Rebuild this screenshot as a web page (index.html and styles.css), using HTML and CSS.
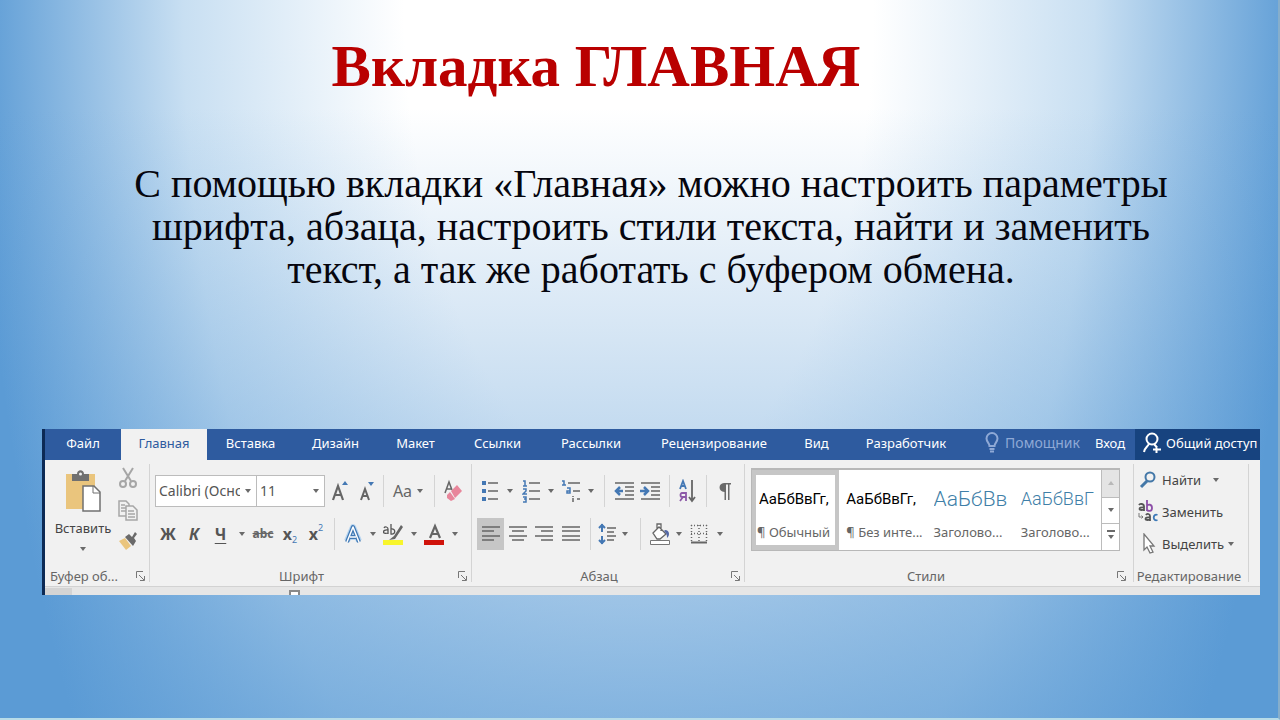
FILE: index.html
```html
<!DOCTYPE html>
<html lang="ru">
<head>
<meta charset="utf-8">
<title>Вкладка ГЛАВНАЯ</title>
<link rel="stylesheet" href="styles.css">
</head>
<body>
<main class="slide">
  <h1 class="title">Вкладка ГЛАВНАЯ</h1>
  <p class="lead">С помощью вкладки «Главная» можно настроить параметры<br>шрифта, абзаца, настроить стили текста, найти и заменить<br>текст, а так же работать с буфером обмена.</p>

  <section class="ribbon">
    <nav class="tabs">
      <button class="tab">Файл</button>
      <button class="tab tab-active">Главная</button>
      <button class="tab">Вставка</button>
      <button class="tab">Дизайн</button>
      <button class="tab">Макет</button>
      <button class="tab">Ссылки</button>
      <button class="tab">Рассылки</button>
      <button class="tab">Рецензирование</button>
      <button class="tab">Вид</button>
      <button class="tab">Разработчик</button>
      <button class="tab tab-help"><svg width="14" height="22" viewBox="0 0 14 22" fill="none" stroke="currentColor" stroke-width="2"><path d="M4.500 14C4.500 11 1.500 10 1.500 6.500a5.500 5.500 0 0 1 11 0C12.500 10 9.500 11 9.500 14ZM4.500 17h5M5 19.500h4"/></svg>Помощник</button>
      <button class="tab">Вход</button>
      <button class="tab tab-share"><svg width="20" height="22" viewBox="0 0 20 22" fill="none" stroke="currentColor" stroke-width="2"><circle cx="10" cy="7" r="5.500"/><path d="M7 11.500C6 15 3 15 2 20M12 12l3 3.500M14.500 14v7M11 17.500h8"/></svg>Общий доступ</button>
    </nav>

    <div class="groups">
      <div class="group group-clipboard">
        <div class="clip">
          <button class="paste">
            <svg width="36" height="42" viewBox="0 0 36 42"><path fill="#eac57d" d="M1 4h29v35H1z"/><path fill="#707070" d="M7 4h5c0-5 7-5 7 0h5v7H7z"/><circle cx="15.500" cy="4" r="1.500" fill="#f1f1f1"/><path fill="#fff" stroke="#707070" stroke-width="1.500" d="M18 16h11l6 6v19H18z"/><path fill="none" stroke="#707070" d="M28 16v7h7"/></svg>
            <span>Вставить</span><i class="caret"></i>
          </button>
          <div class="clip-tools">
            <button aria-label="Вырезать"><svg width="18" height="22" viewBox="0 0 18 22" fill="none" stroke="#a6a6a6" stroke-width="2"><path d="M4 1l8 13M14 1L6 14"/><circle cx="4" cy="17" r="3"/><circle cx="14" cy="17" r="3"/></svg></button>
            <button aria-label="Копировать"><svg width="20" height="22" viewBox="0 0 20 22" fill="#f1f1f1" stroke="#a6a6a6" stroke-width="1.500"><path d="M1 2h7l3 3v12H1zM3 6h4M3 9h5M3 12h5"/><path d="M8 7h7l4 4v10H8zM10 12h6M10 15h7M10 18h7"/></svg></button>
            <button aria-label="Формат по образцу"><svg width="20" height="20" viewBox="0 0 20 20"><path fill="#eac57d" d="M1 10l6-3 6 8-5 4z"/><path fill="#6a6a6a" d="M7 6l4-3 3 3 3-5 2 2-3 4 2 3-3 5z"/></svg></button>
          </div>
        </div>
        <div class="caption"><span>Буфер об...</span><button class="launch" aria-label="Параметры буфера"><svg width="9" height="10" viewBox="0 0 9 10" fill="none" stroke="#777"><path d="M.5 7V.5H7M3 4l5 5M8.500 5v4.500H4"/></svg></button></div>
      </div>

      <div class="group group-font">
        <div class="row font-row-1">
          <label class="combo"><select aria-label="Шрифт"><option>Calibri (Основной текст)</option></select><i class="caret"></i></label>
          <label class="combo"><select aria-label="Размер шрифта"><option>11</option></select><i class="caret"></i></label>
          <button aria-label="Увеличить размер"><svg width="18" height="22" viewBox="0 0 18 22" fill="none"><path stroke="#666" stroke-width="2.200" d="M2 20L7 6l5 14M4 15h6"/><path fill="#4478b4" d="M11 5l3-4 3 4z"/></svg></button>
          <button aria-label="Уменьшить размер"><svg width="16" height="22" viewBox="0 0 16 22" fill="none"><path stroke="#666" stroke-width="2" d="M2 20L6 9l4 11M4 16h5"/><path fill="#4478b4" d="M9 2l3 4 3-4z"/></svg></button>
          <i class="rule"></i>
          <button class="case">Aa<i class="caret"></i></button>
          <i class="rule"></i>
          <button aria-label="Очистить формат"><svg width="20" height="24" viewBox="0 0 20 24"><path fill="none" stroke="#666" stroke-width="1.500" d="M2 14L6 3l3 8M3 10h5"/><path fill="#e8869b" d="M8 12l6-6 5 6-7 7zM4 16l3-3 5 7-4 2-4-3z"/></svg></button>
        </div>
        <div class="row font-row-2">
          <button class="glyph bold">Ж</button>
          <button class="glyph bold slant">К</button>
          <button class="glyph bold under">Ч</button>
          <button aria-label="Вид подчёркивания"><i class="caret"></i></button>
          <button class="strike">abc</button>
          <button class="glyph bold">x<sub>2</sub></button>
          <button class="glyph bold">x<sup>2</sup></button>
          <i class="rule"></i>
          <button aria-label="Эффекты текста"><svg width="20" height="22" viewBox="0 0 20 22" fill="none" stroke-linejoin="round"><path stroke="#b9d6f0" stroke-width="6" d="M4 18L10 4l6 14M7 14h6"/><path stroke="#3f78b4" stroke-width="4" d="M4 19L10 4l6 15M7 14h6"/><path stroke="#fff" stroke-width="1.500" d="M4 19L10 4l6 15M7 14h6"/></svg></button>
          <button aria-label="Вид текстовых эффектов"><i class="caret"></i></button>
          <button class="marker" aria-label="Цвет выделения"><svg width="20" height="22" viewBox="0 0 20 22"><path fill="none" stroke="#555" stroke-width="1.300" d="M1 5c1-2 4-1 4 1v5M5 7c-6-1-6 5 0 3M8 1v10c5 1 5-6 0-5"/><path fill="#666" d="M18 2l2 2-8 12-6 1 5-4z"/><path fill="#f8f52c" d="M0 17h20v5H0z"/></svg></button>
          <button aria-label="Выбор выделения"><i class="caret"></i></button>
          <button aria-label="Цвет текста"><svg width="20" height="22" viewBox="0 0 20 22" fill="none"><path stroke="#666" stroke-width="2.200" d="M6 15l5-12 5 12M8 11h6"/><path fill="#d0130b" d="M0 17h20v5H0z"/></svg></button>
          <button aria-label="Выбор цвета текста"><i class="caret"></i></button>
        </div>
        <div class="caption"><span>Шрифт</span><button class="launch" aria-label="Параметры шрифта"><svg width="9" height="10" viewBox="0 0 9 10" fill="none" stroke="#777"><path d="M.5 7V.5H7M3 4l5 5M8.500 5v4.500H4"/></svg></button></div>
      </div>

      <div class="group group-para">
        <div class="row para-row-1">
          <button aria-label="Маркеры"><svg width="18" height="22" viewBox="0 0 18 22"><path stroke="#666" stroke-width="1.500" d="M7 3h10M7 11h10M7 19h10"/><path fill="#4478b4" d="M1 1h4v4H1zM1 9h4v4H1zM1 17h4v4H1z"/></svg></button>
          <button aria-label="Вид маркеров"><i class="caret"></i></button>
          <button aria-label="Нумерация"><svg width="18" height="24" viewBox="0 0 18 24" fill="none"><path stroke="#666" stroke-width="1.500" d="M7 4h11M7 12h11M7 20h11"/><path stroke="#4478b4" stroke-width="1.500" d="M1 2h2v5M1 7h4M1 10h3v2l-3 3h4M1 18h3v5H1M2 20h2"/></svg></button>
          <button aria-label="Вид нумерации"><i class="caret"></i></button>
          <button aria-label="Многоуровневый список"><svg width="20" height="24" viewBox="0 0 20 24" fill="none"><path stroke="#666" stroke-width="1.500" d="M7 4h12M12 12h7M16 20h3M12 17v1M12 19v4"/><path stroke="#4478b4" stroke-width="1.500" d="M1 2h2v4M1 6h4M6 9h3v5H6v-2h3"/></svg></button>
          <button aria-label="Вид многоуровневого списка"><i class="caret"></i></button>
          <i class="rule"></i>
          <button aria-label="Уменьшить отступ"><svg width="20" height="20" viewBox="0 0 20 20" fill="none"><path stroke="#666" stroke-width="1.500" d="M1 2h19M11 6h9M11 10h9M11 14h9M1 18h19"/><path stroke="#4478b4" stroke-width="2.500" d="M9 10H2M6 6l-4 4 4 4"/></svg></button>
          <button aria-label="Увеличить отступ"><svg width="20" height="20" viewBox="0 0 20 20" fill="none"><path stroke="#666" stroke-width="1.500" d="M1 2h19M11 6h9M11 10h9M11 14h9M1 18h19"/><path stroke="#4478b4" stroke-width="2.500" d="M0 10h7M4 6l4 4-4 4"/></svg></button>
          <i class="rule"></i>
          <button aria-label="Сортировка"><svg width="18" height="24" viewBox="0 0 18 24" fill="none" stroke-width="1.800"><path stroke="#4478b4" d="M1 10l3-8 3 8M2 7h4"/><path stroke="#8d5aa8" d="M7 22v-8H3c-2 0-2 4 0 4h4M4 18l-3 4"/><path stroke="#666" d="M13 1v20M10 18l3 4 3-4"/></svg></button>
          <i class="rule"></i>
          <button aria-label="Все знаки"><svg width="14" height="20" viewBox="0 0 14 20"><path fill="#6a6a6a" d="M13 2v1.500h-1.500V19H10V3.500H8V19H6.500V11C0 11 0 2 6 2z"/></svg></button>
        </div>
        <div class="row para-row-2">
          <button class="pressed" aria-label="По левому краю"><svg width="18" height="20" viewBox="0 0 18 20" stroke="#666" stroke-width="1.500"><path d="M0 3h18M0 7h12M0 12h18M0 16h12"/></svg></button>
          <button aria-label="По центру"><svg width="18" height="20" viewBox="0 0 18 20" stroke="#666" stroke-width="1.500"><path d="M0 3h18M3 7h12M0 12h18M3 16h12"/></svg></button>
          <button aria-label="По правому краю"><svg width="18" height="20" viewBox="0 0 18 20" stroke="#666" stroke-width="1.500"><path d="M0 3h18M6 7h12M0 12h18M6 16h12"/></svg></button>
          <button aria-label="По ширине"><svg width="18" height="20" viewBox="0 0 18 20" stroke="#666" stroke-width="1.500"><path d="M0 3h18M0 7h18M0 12h18M0 16h18"/></svg></button>
          <i class="rule"></i>
          <button aria-label="Интервал"><svg width="18" height="22" viewBox="0 0 18 22" fill="none"><path stroke="#666" stroke-width="1.500" d="M9 5h9M9 9h7M9 13h9M9 17h7"/><path stroke="#4478b4" stroke-width="2" d="M4 1v8M1 5l3-3 3 3M4 13v8M1 17l3 3 3-3"/></svg></button>
          <button aria-label="Выбор интервала"><i class="caret"></i></button>
          <i class="rule"></i>
          <button aria-label="Заливка"><svg width="20" height="22" viewBox="0 0 20 22"><path fill="#fff" stroke="#666" stroke-width="1.300" d="M3 10l6-6 7 7-6 5H7zM7 7V1h4v7"/><path fill="#5468a6" d="M15 7c5 0 5 6 2 8 0-4-1-5-3-7z"/><path fill="#fff" stroke="#777" d="M.5 17.500h19v4H.5z"/></svg></button>
          <button aria-label="Выбор заливки"><i class="caret"></i></button>
          <button aria-label="Границы"><svg width="18" height="20" viewBox="0 0 18 20" fill="none" stroke="#666"><path stroke-dasharray="1 2" stroke-width="1.500" d="M1 1.500h16M1 9.500h16M1.500 1v17M9 1v17M16.500 1v17"/><path stroke-width="2" d="M1 18.500h16"/></svg></button>
          <button aria-label="Выбор границ"><i class="caret"></i></button>
        </div>
        <div class="caption"><span>Абзац</span><button class="launch" aria-label="Параметры абзаца"><svg width="9" height="10" viewBox="0 0 9 10" fill="none" stroke="#777"><path d="M.5 7V.5H7M3 4l5 5M8.500 5v4.500H4"/></svg></button></div>
      </div>

      <div class="group group-styles">
        <div class="gallery">
          <button class="style style-on"><span class="sample">АаБбВвГг,</span><span class="name">¶ Обычный</span></button>
          <button class="style"><span class="sample">АаБбВвГг,</span><span class="name">¶ Без инте...</span></button>
          <button class="style"><span class="sample sample-h1">АаБбВв</span><span class="name">Заголово...</span></button>
          <button class="style"><span class="sample sample-h2">АаБбВвГ</span><span class="name">Заголово...</span></button>
          <div class="scroll">
            <button class="scroll-off" aria-label="Вверх"><i class="caret caret-up"></i></button>
            <button aria-label="Вниз"><i class="caret"></i></button>
            <button aria-label="Все стили"><i class="caret caret-more"></i></button>
          </div>
        </div>
        <div class="caption"><span>Стили</span><button class="launch" aria-label="Параметры стилей"><svg width="9" height="10" viewBox="0 0 9 10" fill="none" stroke="#777"><path d="M.5 7V.5H7M3 4l5 5M8.500 5v4.500H4"/></svg></button></div>
      </div>

      <div class="group group-edit">
        <div class="commands">
          <button class="command"><svg width="18" height="20" viewBox="0 0 18 20" fill="none" stroke="#4478a8"><circle cx="11" cy="7" r="4.500" stroke-width="2"/><path stroke-width="3" d="M8 11l-6 6"/></svg><span>Найти</span><i class="caret"></i></button>
          <button class="command"><svg width="20" height="24" viewBox="0 0 20 24" fill="none" stroke-width="1.800"><path stroke="#555" d="M1 5c1-2 5-1 5 1v5M6 7.500c-6-1-6 4 0 2M8 15c1-2 4-1 4 1v5M12 17.500c-6-1-6 4 0 2"/><path stroke="#8d4fa8" d="M9 0v11M9 6c1-2 5-2 5 2s-4 3-5 2"/><path stroke="#3d7ab8" d="M19.500 15c-5-2-5 7 0 5"/><path stroke="#777" stroke-width="1" d="M1 13v4h4M3.500 15.500L5 17l-1.500 1.500"/></svg><span>Заменить</span></button>
          <button class="command"><svg width="18" height="22" viewBox="0 0 18 22" fill="#fff" stroke="#777" stroke-width="1.300"><path d="M5 1v16l3-3 3 6 3-1-3-6h4z"/></svg><span>Выделить</span><i class="caret"></i></button>
        </div>
        <div class="caption"><span>Редактирование</span></div>
      </div>
    </div>
    <div class="ruler"><i class="ruler-page"></i><i class="ruler-mark"></i></div>
  </section>
</main>
</body>
</html>
```
FILE: styles.css
```css
* { box-sizing: border-box; }

body {
  margin: 0;
  font-family: "Noto Sans", "Open Sans", sans-serif;
}

button, select {
  font: inherit;
  color: inherit;
  background: none;
  border: 0;
  border-radius: 0;
  margin: 0;
  padding: 0;
}

.slide {
  min-height: 100vh;
  padding: 32px 18px 0 42px;
  border-right: 2px solid #86aecb;
  border-bottom: 2px solid #b8dce8;
  background:
    linear-gradient(rgba(91, 155, 213, 0) 15%, rgba(91, 155, 213, .32) 55%, rgba(91, 155, 213, .7) 100%),
    radial-gradient(ellipse 54% 200% at 50% 0, #fff 0%, #fff 34%, #c8dff2 66%, #5b9bd5 96%);
}

.title {
  margin: 0 132px 0 0;
  padding-left: 22px;
  text-align: center;
  font: bold 59px/68px "Liberation Serif", serif;
  color: #b90000;
}

.lead {
  margin: 62px 0 0;
  text-align: center;
  font: 40px/43px "Liberation Serif", serif;
  color: #06060e;
}

.ribbon {
  margin-top: 138px;
  border-left: 3px solid #0c2a55;
  background: #f1f1f1;
  font-size: 13px;
  line-height: 18px;
  color: #444;
  overflow: hidden;
}

.tabs {
  display: grid;
  grid-template-columns: 76fr 86fr 87fr 83fr 77fr 87fr 100fr 146fr 59fr 120fr 119fr 50fr 125fr;
  height: 31px;
  background: #2e5b9f;
  color: #fff;
}

.tab {
  display: flex;
  align-items: center;
  justify-content: center;
  gap: 6px;
  min-width: 0;
  padding-bottom: 3px;
  white-space: nowrap;
}

.tab-active { background: #f1f1f1; color: #2e5b9f; }
.tab-help {
  justify-content: flex-end;
  padding-right: 5px;
  font-size: 14px;
  color: #8fa9d6;
}
.tab-share {
  justify-content: flex-start;
  gap: 4px;
  padding-left: 7px;
  overflow: hidden;
  background: #17437f;
}
.tab svg { flex: none; }

.groups {
  display: grid;
  grid-template-columns: 105fr 322fr 273fr 389fr 115fr 11fr;
  height: 127px;
  border-bottom: 1px solid #d2d2d2;
}

.group {
  display: flex;
  flex-direction: column;
  min-width: 0;
  padding: 15px 0 1px 5px;
  background: linear-gradient(#d4d4d4, #d4d4d4) right 4px / 1px 118px no-repeat;
}

.row {
  display: grid;
  height: 32px;
  margin-bottom: 11px;
}

.row > button {
  display: flex;
  align-items: center;
  justify-content: center;
}

.font-row-1 { grid-template-columns: 102px 68px 30px 24px 8px 42px 10px 28px; }
.font-row-2 { grid-template-columns: 26px 26px 27px 15px 28px 26px 26px 10px 28px 12px 28px 14px 26px 16px; }
.para-row-1 { grid-template-columns: 26px 14px 28px 12px 28px 12px 14px 26px 26px 12px 26px 10px 28px; }
.para-row-2 { grid-template-columns: 27px 27px 26px 28px 10px 24px 12px 18px 22px 16px 24px 18px; }

.rule {
  width: 1px;
  justify-self: center;
  background: #d4d4d4;
}

.caret {
  flex: none;
  width: 0;
  height: 0;
  border: 3px solid transparent;
  border-top: 4px solid #6a6a6a;
  border-bottom: 0;
}

.caret-up {
  border-top: 0;
  border-bottom: 4px solid #b8b8b8;
}

.caret-more {
  position: relative;
}

.caret-more::before {
  content: "";
  position: absolute;
  left: -4px;
  top: -9px;
  width: 8px;
  height: 2px;
  background: #6a6a6a;
}

.combo {
  position: relative;
  border: 1px solid #bcbcbc;
  background: #fff;
}

.combo + .combo { border-left: 0; }

.combo select {
  width: 100%;
  height: 30px;
  padding: 0 16px 0 3px;
  appearance: none;
  font-size: 14px;
  color: #555;
}

.combo .caret {
  position: absolute;
  right: 5px;
  top: 13px;
  pointer-events: none;
}

.row .case {
  gap: 5px;
  font-size: 16px;
  color: #666;
}

.glyph { font-size: 16px; color: #555; }
.glyph sub, .glyph sup {
  font-size: 9px;
  font-weight: normal;
  line-height: 9px;
  color: #4478b4;
}
.glyph sub { align-self: flex-end; padding-bottom: 6px; }
.glyph sup { align-self: flex-start; padding-top: 5px; }
.bold { font-weight: bold; }
.slant { font-style: italic; }
.under { text-decoration: underline; text-underline-offset: 3px; }
.strike { font-size: 12px; font-weight: bold; color: #666; text-decoration: line-through; }
.pressed { background: #c6c6c6; }

.caption {
  display: flex;
  align-items: center;
  margin-top: auto;
  padding: 0 5px 0 0;
  font-size: 13px;
  color: #666;
  white-space: nowrap;
}

.caption span { flex: 1; padding-right: 10px; text-align: center; }
.launch { display: flex; }

.group-clipboard { padding-top: 7px; }
.clip { display: flex; }
.paste {
  display: flex;
  flex-direction: column;
  align-items: center;
  width: 66px;
  padding-top: 3px;
}
.paste span { margin: 7px 0 10px; }
.clip-tools {
  display: flex;
  flex-direction: column;
  align-items: center;
  gap: 10px;
  width: 24px;
}
.clip-tools button { display: flex; }
.clip-tools svg { display: block; }
.group-clipboard .caption span { text-align: left; }

.group-styles { padding: 8px 8px 1px 6px; }
.group-styles .caption { padding-right: 0; }
.group-styles .caption span { padding-right: 16px; }
.gallery {
  display: grid;
  grid-template-columns: repeat(4, minmax(0, 1fr)) 18px;
  height: 83px;
  margin-right: 6px;
  border: 1px solid #b8b8b8;
  border-top-width: 2px;
  background: #fff;
}
.style {
  display: flex;
  flex-direction: column;
  align-items: flex-start;
  justify-content: center;
  min-width: 0;
  padding: 5px 7px 0;
  overflow: hidden;
  white-space: nowrap;
}
.style-on { padding: 5px 3px 0; border: 5px solid #c6c6c6; border-width: 5px 4px; }
.sample {
  width: 100%;
  height: 34px;
  overflow: hidden;
  text-align: left;
  font: 15px/34px Roboto, sans-serif;
  color: #000;
}
.sample-h1 { font-size: 21px; font-weight: 300; color: #3f7fa8; }
.sample-h2 { font-size: 18px; font-weight: 300; color: #3f7fa8; }
.name { height: 28px; line-height: 32px; font-size: 13px; color: #666; }
.style-on .name { margin-left: -2px; }

.scroll {
  display: grid;
  grid-template-rows: 1fr 1fr 1fr;
  border-left: 1px solid #bcbcbc;
}
.scroll button {
  display: flex;
  align-items: center;
  justify-content: center;
  border-top: 1px solid #bcbcbc;
}
.scroll .scroll-off { border-top: 0; background: #e4e4e4; }

.group-edit { padding: 4px 0 1px 2px; }
.commands { display: grid; grid-template-rows: 32px 32px 32px; padding-left: 2px; }
.command {
  display: flex;
  align-items: center;
  gap: 4px;
}
.command svg { flex: none; width: 20px; }
.command:first-child .caret { margin-left: 8px; }
.group-edit .caption { padding-right: 7px; }
.group-edit .caption span { padding-right: 0; }

.ruler {
  display: flex;
  justify-content: space-between;
  height: 8px;
  padding: 1px 79% 0 0;
  background: #e6e6e6;
}
.ruler-page { width: 27px; background: #d4d4d4; }
.ruler-mark {
  width: 11px;
  margin: 2px 0 0;
  border: 2px solid #8a8a8a;
  border-bottom: 0;
  background: #fff;
}
```
